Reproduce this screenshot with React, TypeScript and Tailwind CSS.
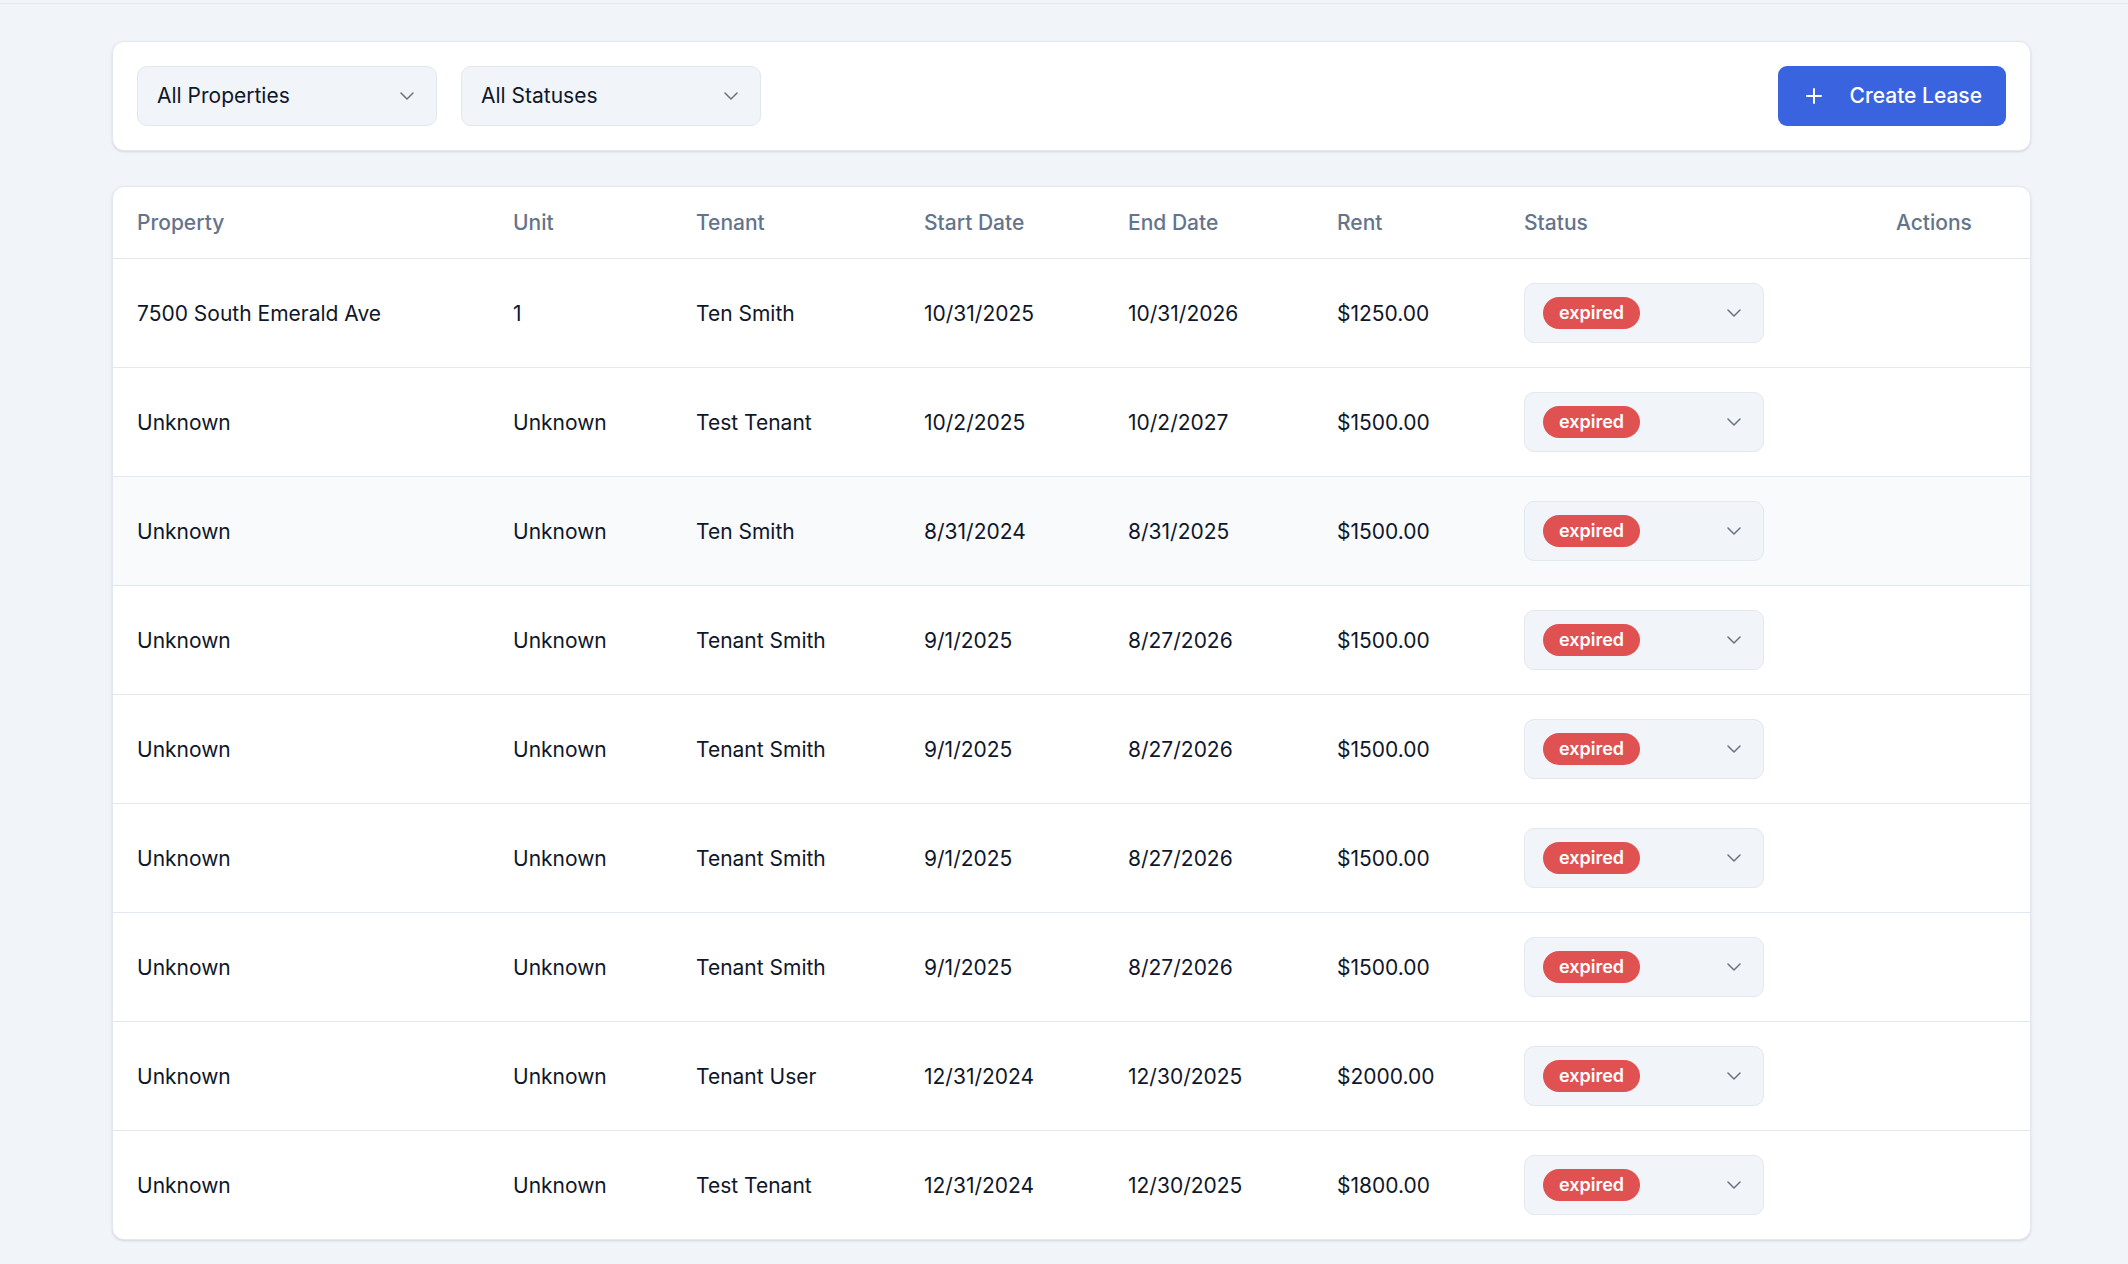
import React from 'react'

type Lease = {
  property: string
  unit: string
  tenant: string
  start: string
  end: string
  rent: string
}

const leases: Lease[] = [
  { property: '7500 South Emerald Ave', unit: '1', tenant: 'Ten Smith', start: '10/31/2025', end: '10/31/2026', rent: '$1250.00' },
  { property: 'Unknown', unit: 'Unknown', tenant: 'Test Tenant', start: '10/2/2025', end: '10/2/2027', rent: '$1500.00' },
  { property: 'Unknown', unit: 'Unknown', tenant: 'Ten Smith', start: '8/31/2024', end: '8/31/2025', rent: '$1500.00' },
  { property: 'Unknown', unit: 'Unknown', tenant: 'Tenant Smith', start: '9/1/2025', end: '8/27/2026', rent: '$1500.00' },
  { property: 'Unknown', unit: 'Unknown', tenant: 'Tenant Smith', start: '9/1/2025', end: '8/27/2026', rent: '$1500.00' },
  { property: 'Unknown', unit: 'Unknown', tenant: 'Tenant Smith', start: '9/1/2025', end: '8/27/2026', rent: '$1500.00' },
  { property: 'Unknown', unit: 'Unknown', tenant: 'Tenant Smith', start: '9/1/2025', end: '8/27/2026', rent: '$1500.00' },
  { property: 'Unknown', unit: 'Unknown', tenant: 'Tenant User', start: '12/31/2024', end: '12/30/2025', rent: '$2000.00' },
  { property: 'Unknown', unit: 'Unknown', tenant: 'Test Tenant', start: '12/31/2024', end: '12/30/2025', rent: '$1800.00' },
]

const Chevron: React.FC = () => (
  <svg width="14" height="8" viewBox="0 0 14 8" fill="none" className="shrink-0">
    <path d="M1 1l6 6 6-6" stroke="#6b7280" strokeWidth="1.5" strokeLinecap="round" strokeLinejoin="round" />
  </svg>
)

const FilterSelect: React.FC<{ label: string }> = ({ label }) => (
  <div className="flex h-[60px] w-[300px] items-center justify-between rounded-[10px] border border-[#e2e8f0] bg-[#f1f4f9] pl-[19px] pr-[22px] text-[21px] text-[#0f172a]">
    <span>{label}</span>
    <Chevron />
  </div>
)

const StatusSelect: React.FC = () => (
  <div className="flex h-[60px] w-[240px] items-center justify-between rounded-[10px] border border-[#e2e8f0] bg-[#f1f4f9] pl-[18px] pr-[22px]">
    <span className="flex h-[32px] items-center rounded-full bg-[#e05252] px-4 text-[18px] font-semibold text-white">
      expired
    </span>
    <Chevron />
  </div>
)

const headers = ['Property', 'Unit', 'Tenant', 'Start Date', 'End Date', 'Rent', 'Status', 'Actions']

const App: React.FC = () => {
  return (
    <div className="min-h-screen bg-[#f1f4f9] [font-family:Inter,sans-serif]">
      <div className="h-[4px] border-b border-[#e2e8f0]" />

      <div className="ml-[112px] w-[1919px] pt-[37px] pb-6">
        {/* Filters */}
        <div className="flex items-center justify-between rounded-xl border border-[#e2e8f0] bg-white p-6 shadow-sm">
          <div className="flex gap-6">
            <FilterSelect label="All Properties" />
            <FilterSelect label="All Statuses" />
          </div>
          <button className="flex h-[60px] items-center gap-[28px] rounded-[9px] bg-[#3a63e0] pl-[28px] pr-[24px] text-[21px] font-medium text-white">
            <svg width="16" height="16" viewBox="0 0 16 16" fill="none">
              <path d="M8 1v14M1 8h14" stroke="white" strokeWidth="2" strokeLinecap="round" />
            </svg>
            Create Lease
          </button>
        </div>

        {/* Leases table */}
        <div className="mt-[35px] overflow-hidden rounded-xl border border-[#e2e8f0] bg-white shadow-sm">
          <table className="w-full table-fixed border-collapse text-left">
            <colgroup>
              <col className="w-[376px]" />
              <col className="w-[183px]" />
              <col className="w-[228px]" />
              <col className="w-[204px]" />
              <col className="w-[209px]" />
              <col className="w-[187px]" />
              <col className="w-[372px]" />
              <col />
            </colgroup>
            <thead>
              <tr className="h-[71px] border-b border-[#e2e8f0]">
                {headers.map((h) => (
                  <th key={h} className="px-6 text-[21px] font-medium text-[#64748b]">
                    {h}
                  </th>
                ))}
              </tr>
            </thead>
            <tbody>
              {leases.map((l, i) => (
                <tr
                  key={i}
                  className={`h-[109px] border-[#e2e8f0] ${i < leases.length - 1 ? 'border-b' : ''} ${i === 2 ? 'bg-[#f8fafc]' : ''}`}
                >
                  <td className="px-6 pt-[2px] text-[21px] text-[#0f172a]">{l.property}</td>
                  <td className="px-6 pt-[2px] text-[21px] text-[#0f172a]">{l.unit}</td>
                  <td className="px-6 pt-[2px] text-[21px] text-[#0f172a]">{l.tenant}</td>
                  <td className="px-6 pt-[2px] text-[21px] text-[#0f172a]">{l.start}</td>
                  <td className="px-6 pt-[2px] text-[21px] text-[#0f172a]">{l.end}</td>
                  <td className="px-6 pt-[2px] text-[21px] text-[#0f172a]">{l.rent}</td>
                  <td className="px-6">
                    <StatusSelect />
                  </td>
                  <td className="px-6" />
                </tr>
              ))}
            </tbody>
          </table>
        </div>
      </div>
    </div>
  )
}

export default App
